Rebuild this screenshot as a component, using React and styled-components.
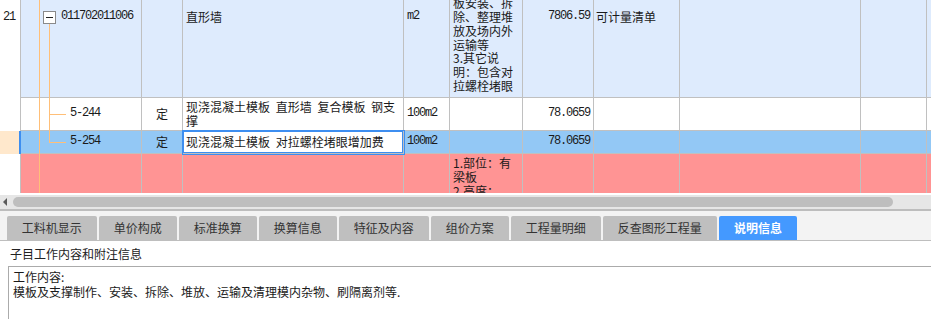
import React from "react";
import styled, { createGlobalStyle } from "styled-components";

const GlobalStyle = createGlobalStyle`
  html, body {
    margin: 0;
    padding: 0;
    background: #fff;
  }
  body {
    font-family: "Noto Sans CJK SC", "Liberation Sans", sans-serif;
    font-size: 12px;
    color: #1a1a1a;
    overflow: hidden;
  }
  * {
    box-sizing: border-box;
  }
`;

// largeurs de colonnes de la grille (bordure droite incluse)
const COLS = "21px 121px 41px 221px 46px 73px 71px 86px 181px 66px 1fr";
const LINE = "#c0c0c0";
const GUIDE = "#ffbf78";
const BLUE = "#3d8ef0";

const ROW_BG = {
  group: "#deebfd",
  normal: "#ffffff",
  selected: "#93c8f5",
  error: "#ff9494",
};

const Page = styled.div`
  width: 931px;
  height: 319px;
  display: flex;
  flex-direction: column;
  overflow: hidden;
  background: #fff;
`;

const GridViewport = styled.div`
  flex: none;
  height: 193px;
  overflow: hidden;
`;

const GridBody = styled.div`
  margin-top: ${(p) => -p.$scrollTop}px;
`;

const Row = styled.div`
  display: grid;
  grid-template-columns: ${COLS};
  height: ${(p) => (p.$height ? `${p.$height}px` : "auto")};
  background: ${(p) => ROW_BG[p.$kind]};
  line-height: 13.8px;
`;

const Cell = styled.div`
  display: flex;
  align-items: center;
  justify-content: ${(p) =>
    p.$align === "right" ? "flex-end" : p.$align === "center" ? "center" : "flex-start"};
  min-width: 0;
  padding: 2px 3px;
  border-right: 1px solid ${LINE};
  border-bottom: 1px solid ${LINE};
  overflow: hidden;
  word-spacing: 3px;
`;

const NoteCell = styled(Cell)`
  padding-left: 2px;
`;

const NameCell = styled(Cell)`
  position: relative;
  z-index: ${(p) => (p.$editing ? 2 : "auto")};
  overflow: ${(p) => (p.$editing ? "visible" : "hidden")};
  background: ${(p) => (p.$editing ? "#fff" : "transparent")};
  box-shadow: ${(p) => (p.$editing ? `0 0 0 1px ${BLUE}, inset 0 0 0 1px ${BLUE}` : "none")};
`;

const NumCell = styled.div`
  display: flex;
  align-items: center;
  padding-left: 3px;
  background: ${(p) => (p.$selected ? "#ffe8cc" : "#fff")};
  border-right: 1px solid ${(p) => (p.$selected ? BLUE : LINE)};
  box-shadow: ${(p) => (p.$selected ? `inset -1px 0 0 ${BLUE}` : "none")};
`;

const TreeCell = styled(Cell)`
  position: relative;
  overflow: visible;
  padding-left: ${(p) => p.$indent}px;
`;

const VGuide = styled.span`
  position: absolute;
  z-index: 1;
  left: ${(p) => p.$x}px;
  width: 1px;
  top: ${(p) => p.$top || "-1px"};
  bottom: ${(p) => p.$bottom || "-1px"};
  background: ${GUIDE};
`;

const HGuide = styled.span`
  position: absolute;
  z-index: 1;
  left: 28px;
  width: 17px;
  top: 50%;
  height: 1px;
  background: ${GUIDE};
`;

const Toggle = styled.span`
  position: relative;
  flex: none;
  width: 13px;
  height: 13px;
  margin-right: 5px;
  border: 1px solid #8a8a8a;
  background: #fff;

  &::after {
    content: "";
    position: absolute;
    left: 2px;
    right: 2px;
    top: 5px;
    height: 1px;
    background: #222;
  }
`;

const Mono = styled.span`
  font-family: "Liberation Mono", "DejaVu Sans Mono", monospace;
  font-size: 12px;
  letter-spacing: -1.2px;
  word-spacing: 0;
`;

const Lines = styled.div`
  white-space: nowrap;
`;

/* barre de défilement horizontale */
const HScroll = styled.div`
  flex: none;
  margin-top: 2px;
  height: 16px;
  display: flex;
  align-items: center;
  background: #e6e6e6;
  border-bottom: 2px solid #bdbdbd;
`;

const ArrowLeft = styled.span`
  width: 0;
  height: 0;
  margin-left: 3px;
  border-top: 4px solid transparent;
  border-bottom: 4px solid transparent;
  border-right: 4px solid #5a5a5a;
`;

const Thumb = styled.span`
  width: 880px;
  height: 10px;
  margin-left: 6px;
  border-radius: 5px;
  background: #bebebe;
`;

const TabBar = styled.div`
  flex: none;
  height: 30px;
  display: flex;
  align-items: flex-end;
  gap: 2.5px;
  padding-left: 7px;
  background: #f3f3f3;
  border-bottom: 1px solid #bebebe;
`;

const Tab = styled.div`
  height: 24px;
  padding: 0 14.75px;
  border-radius: 2px 2px 0 0;
  line-height: 24px;
  font-size: 12px;
  white-space: nowrap;
  background: ${(p) => (p.$active ? "#4499ff" : "#bfbfbf")};
  color: ${(p) => (p.$active ? "#fff" : "#333")};
  font-weight: ${(p) => (p.$active ? "bold" : "normal")};
`;

const Caption = styled.div`
  flex: none;
  height: 25px;
  display: flex;
  align-items: center;
  padding-left: 10px;
  color: #222;
`;

const TextBox = styled.div`
  flex: none;
  height: 80px;
  margin-left: 8px;
  margin-right: -2px;
  padding: 3px 4px;
  border: 1px solid #ababab;
  line-height: 14.5px;
  color: #1a1a1a;
`;

const rows = [
  {
    kind: "group",
    height: 161,
    num: "21",
    code: "011702011006",
    toggle: true,
    name: "直形墙",
    unit: "m2",
    desc: [
      "1.部位：直",
      "形墙",
      "2.工作内容",
      "：模板制作",
      "板安装、拆",
      "除、整理堆",
      "放及场内外",
      "运输等",
      "3.其它说",
      "明：包含对",
      "拉螺栓堵眼",
    ],
    qty: "7806.59",
    note: "可计量清单",
  },
  {
    kind: "normal",
    height: 33,
    code: "5-244",
    branch: "mid",
    type: "定",
    name: "现浇混凝土模板 直形墙 复合模板 钢支撑",
    unit: "100m2",
    qty: "78.0659",
  },
  {
    kind: "selected",
    height: 23,
    code: "5-254",
    branch: "last",
    type: "定",
    name: "现浇混凝土模板 对拉螺栓堵眼增加费",
    unit: "100m2",
    qty: "78.0659",
    editing: true,
  },
  {
    kind: "error",
    desc: ["1.部位：有", "梁板", "2.高度：", "3.6m以内"],
  },
];

const tabs = [
  "工料机显示",
  "单价构成",
  "标准换算",
  "换算信息",
  "特征及内容",
  "组价方案",
  "工程量明细",
  "反查图形工程量",
  "说明信息",
];

function TreeGuides({ row }) {
  if (row.toggle) {
    return (
      <>
        <VGuide $x={18} />
        <VGuide $x={28} $top="calc(50% + 7px)" />
      </>
    );
  }
  return (
    <>
      <VGuide $x={18} />
      {row.branch && <VGuide $x={28} $bottom={row.branch === "last" ? "50%" : "-1px"} />}
      {row.branch && <HGuide />}
    </>
  );
}

function GridRow({ row }) {
  return (
    <Row $kind={row.kind} $height={row.height}>
      <NumCell $selected={row.kind === "selected"}>{row.num && <Mono>{row.num}</Mono>}</NumCell>
      <TreeCell $indent={row.toggle ? 22 : 49}>
        <TreeGuides row={row} />
        {row.toggle && <Toggle />}
        {row.code && <Mono>{row.code}</Mono>}
      </TreeCell>
      <Cell $align="center">{row.type}</Cell>
      <NameCell $editing={row.editing}>{row.name && <span>{row.name}</span>}</NameCell>
      <Cell>{row.unit && <Mono>{row.unit}</Mono>}</Cell>
      <Cell>
        {row.desc && (
          <Lines>
            {row.desc.map((l, i) => (
              <div key={i}>{l}</div>
            ))}
          </Lines>
        )}
      </Cell>
      <Cell $align="right">{row.qty && <Mono>{row.qty}</Mono>}</Cell>
      <NoteCell>{row.note}</NoteCell>
      <Cell />
      <Cell />
      <Cell />
    </Row>
  );
}

export default function App() {
  return (
    <>
      <GlobalStyle />
      <Page>
        <GridViewport>
          <GridBody $scrollTop={63}>
            {rows.map((r, i) => (
              <GridRow key={i} row={r} />
            ))}
          </GridBody>
        </GridViewport>
        <HScroll>
          <ArrowLeft />
          <Thumb />
        </HScroll>
        <TabBar>
          {tabs.map((t) => (
            <Tab key={t} $active={t === "说明信息"}>
              {t}
            </Tab>
          ))}
        </TabBar>
        <Caption>子目工作内容和附注信息</Caption>
        <TextBox>
          <div>工作内容:</div>
          <div>模板及支撑制作、安装、拆除、堆放、运输及清理模内杂物、刷隔离剂等.</div>
        </TextBox>
      </Page>
    </>
  );
}
